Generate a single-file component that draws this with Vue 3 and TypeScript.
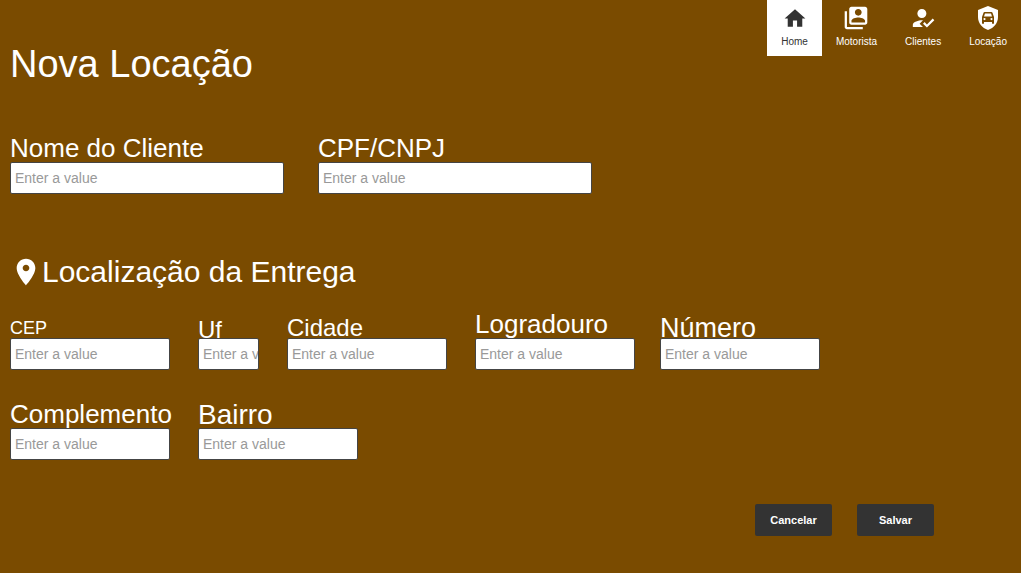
<script setup lang="ts">
import { ref } from 'vue'

interface NavItem {
  label: string
  box: string
  icon: string
}
interface Field {
  id: string
  label: string
  size: string
  width: string
}

const navItems: NavItem[] = [
  {
    label: 'Home',
    box: '0 -1 24 25',
    icon: 'M10 20v-6h4v6h5v-8h3L12 3 2 12h3v8z',
  },
  {
    label: 'Motorista',
    box: '0.5 0.5 23 23',
    icon: 'M4 6H2v14c0 1.1.9 2 2 2h14v-2H4V6zm16-4H8c-1.1 0-2 .9-2 2v12c0 1.1.9 2 2 2h12c1.1 0 2-.9 2-2V4c0-1.1-.9-2-2-2zm-6 2c1.66 0 3 1.34 3 3s-1.34 3-3 3-3-1.34-3-3 1.34-3 3-3zm6 12H8v-1.5c0-1.99 4-3 6-3s6 1.01 6 3V16z',
  },
  {
    label: 'Clientes',
    box: '0.5 0.5 23 23',
    icon: 'M9 17l3-2.94c-.39-.04-.68-.06-1-.06-2.67 0-8 1.34-8 4v2h9l-3-3zm2-5c2.21 0 4-1.79 4-4s-1.79-4-4-4-4 1.79-4 4 1.79 4 4 4m4.47 8.5L12 17l1.4-1.41 2.07 2.08 5.13-5.17 1.4 1.41z',
  },
  {
    label: 'Locação',
    box: '-1 -1 26 26',
    icon: 'M12 0L2 4v7c0 6 4 11 10 13 6-2 10-7 10-13V4zM8.600 6h6.800q.8 0 1.1.8L18 11v6.200q0 .6-.6.6h-.8q-.6 0-.6-.6V16H8v1.200q0 .6-.6.6h-.8q-.6 0-.6-.6V11l1.500-4.200q.3-.8 1.1-.8zM9 7.500L8 10.500h8l-1-3zM8.500 12a1.1 1.1 0 1 0 0 2.200a1.1 1.1 0 0 0 0-2.200zM15.500 12a1.1 1.1 0 1 0 0 2.200a1.1 1.1 0 0 0 0-2.200z',
  },
]

const clientFields: Field[] = [
  { id: 'nome', label: 'Nome do Cliente', size: 'large', width: 'wide' },
  { id: 'cpf', label: 'CPF/CNPJ', size: 'large', width: 'wide' },
]
const cityFields: Field[] = [
  { id: 'cep', label: 'CEP', size: 'small', width: 'regular' },
  { id: 'uf', label: 'Uf', size: 'state', width: 'narrow' },
  { id: 'cidade', label: 'Cidade', size: 'medium', width: 'regular' },
]
const streetFields: Field[] = [
  { id: 'logradouro', label: 'Logradouro', size: 'large', width: 'regular' },
  { id: 'numero', label: 'Número', size: 'number', width: 'regular' },
]
const extraFields: Field[] = [
  { id: 'complemento', label: 'Complemento', size: 'large', width: 'regular' },
  { id: 'bairro', label: 'Bairro', size: 'district', width: 'regular' },
]

const active = ref('Home')
const values = ref<Record<string, string>>({})
function reset() {
  values.value = {}
}
</script>

<template>
  <div class="page">
    <header class="header">
      <h1>Nova Locação</h1>
      <nav class="nav">
        <a
          v-for="item in navItems"
          :key="item.label"
          href="#"
          :class="{ active: item.label === active }"
          @click.prevent="active = item.label"
        >
          <svg :viewBox="item.box" aria-hidden="true"><path fill-rule="evenodd" :d="item.icon" /></svg>
          <span>{{ item.label }}</span>
        </a>
      </nav>
    </header>

    <form class="form" @submit.prevent>
      <div class="row client">
        <div v-for="f in clientFields" :key="f.id" class="field" :class="f.width">
          <label :for="f.id" :class="f.size">{{ f.label }}</label>
          <input :id="f.id" v-model="values[f.id]" type="text" placeholder="Enter a value" />
        </div>
      </div>

      <h2>
        <svg viewBox="0 0 24 24" aria-hidden="true">
          <path d="M12 2C8.130 2 5 5.130 5 9c0 5.250 7 13 7 13s7-7.750 7-13c0-3.870-3.130-7-7-7zm0 9.500c-1.380 0-2.500-1.120-2.500-2.500s1.120-2.500 2.500-2.500 2.500 1.120 2.500 2.500-1.120 2.500-2.500 2.500z" />
        </svg>
        Localização da Entrega
      </h2>

      <div class="row address">
        <div v-for="f in cityFields" :key="f.id" class="field" :class="f.width">
          <label :for="f.id" :class="f.size">{{ f.label }}</label>
          <input :id="f.id" v-model="values[f.id]" type="text" placeholder="Enter a value" />
        </div>
        <div class="row street">
          <div v-for="f in streetFields" :key="f.id" class="field" :class="f.width">
            <label :for="f.id" :class="f.size">{{ f.label }}</label>
            <input :id="f.id" v-model="values[f.id]" type="text" placeholder="Enter a value" />
          </div>
        </div>
      </div>

      <div class="row extra">
        <div v-for="f in extraFields" :key="f.id" class="field" :class="f.width">
          <label :for="f.id" :class="f.size">{{ f.label }}</label>
          <input :id="f.id" v-model="values[f.id]" type="text" placeholder="Enter a value" />
        </div>
      </div>

      <div class="actions">
        <button type="button" @click="reset">Cancelar</button>
        <button type="submit">Salvar</button>
      </div>
    </form>
  </div>
</template>

<style>
html,
body {
  margin: 0;
  background: #7a4b00;
}
</style>

<style scoped>
.page {
  min-height: 100vh;
  box-sizing: border-box;
  background: #7a4b00;
  color: #fff;
  font-family: "Liberation Sans", Arial, sans-serif;
}
.header {
  display: flex;
  justify-content: space-between;
  align-items: flex-start;
}
h1,
h2 {
  margin: 0;
  font-weight: 400;
}
h1 {
  padding: 42px 0 0 10px;
  font-size: 38px;
  line-height: 44px;
}
.nav {
  display: flex;
}
.nav a {
  display: flex;
  flex-direction: column;
  align-items: center;
  gap: 5px;
  height: 56px;
  box-sizing: border-box;
  padding: 5px 14px 0;
  color: #fff;
  font-size: 10px;
  line-height: 12px;
  text-decoration: none;
}
.nav a.active {
  background: #fff;
  color: #333;
}
svg {
  width: 26px;
  height: 26px;
  fill: currentColor;
}
.form {
  padding: 48px 10px 36px;
}
.row {
  display: flex;
  align-items: flex-end;
}
.client {
  gap: 34px;
}
.address,
.extra {
  gap: 28px;
}
.street {
  gap: 25px;
}
.address {
  margin-top: 22px;
}
.extra {
  margin-top: 30px;
}
.field {
  display: flex;
  flex-direction: column;
  min-width: 0;
}
.wide {
  flex: 0 1 274px;
}
.regular {
  flex: 0 1 160px;
}
.narrow {
  flex: 0 1 61px;
}
label {
  white-space: nowrap;
}
.small {
  font-size: 18px;
  line-height: 20px;
}
.state {
  font-size: 24px;
  line-height: 16px;
}
.medium {
  font-size: 24px;
  line-height: 20px;
}
.large {
  font-size: 26px;
  line-height: 28px;
}
.number {
  font-size: 27px;
  line-height: 20px;
}
.district {
  font-size: 28px;
  line-height: 26px;
}
input {
  height: 32px;
  min-width: 0;
  box-sizing: border-box;
  margin: 0;
  padding: 0 0 0 4px;
  border: 1px solid #444;
  border-radius: 2px;
  background: #fff;
  color: #333;
  font-family: inherit;
  font-size: 14px;
}
input::placeholder {
  color: #999;
  opacity: 1;
}
h2 {
  display: flex;
  align-items: center;
  margin-top: 62px;
  font-size: 30px;
  line-height: 32px;
}
h2 svg {
  width: 32px;
  height: 32px;
}
.actions {
  display: flex;
  justify-content: flex-end;
  gap: 25px;
  margin-top: 44px;
  padding-right: 77px;
}
button {
  width: 77px;
  height: 32px;
  padding: 0;
  border: 0;
  border-radius: 2px;
  background: #333;
  color: #fff;
  font-family: inherit;
  font-size: 11px;
  font-weight: 700;
}
</style>
